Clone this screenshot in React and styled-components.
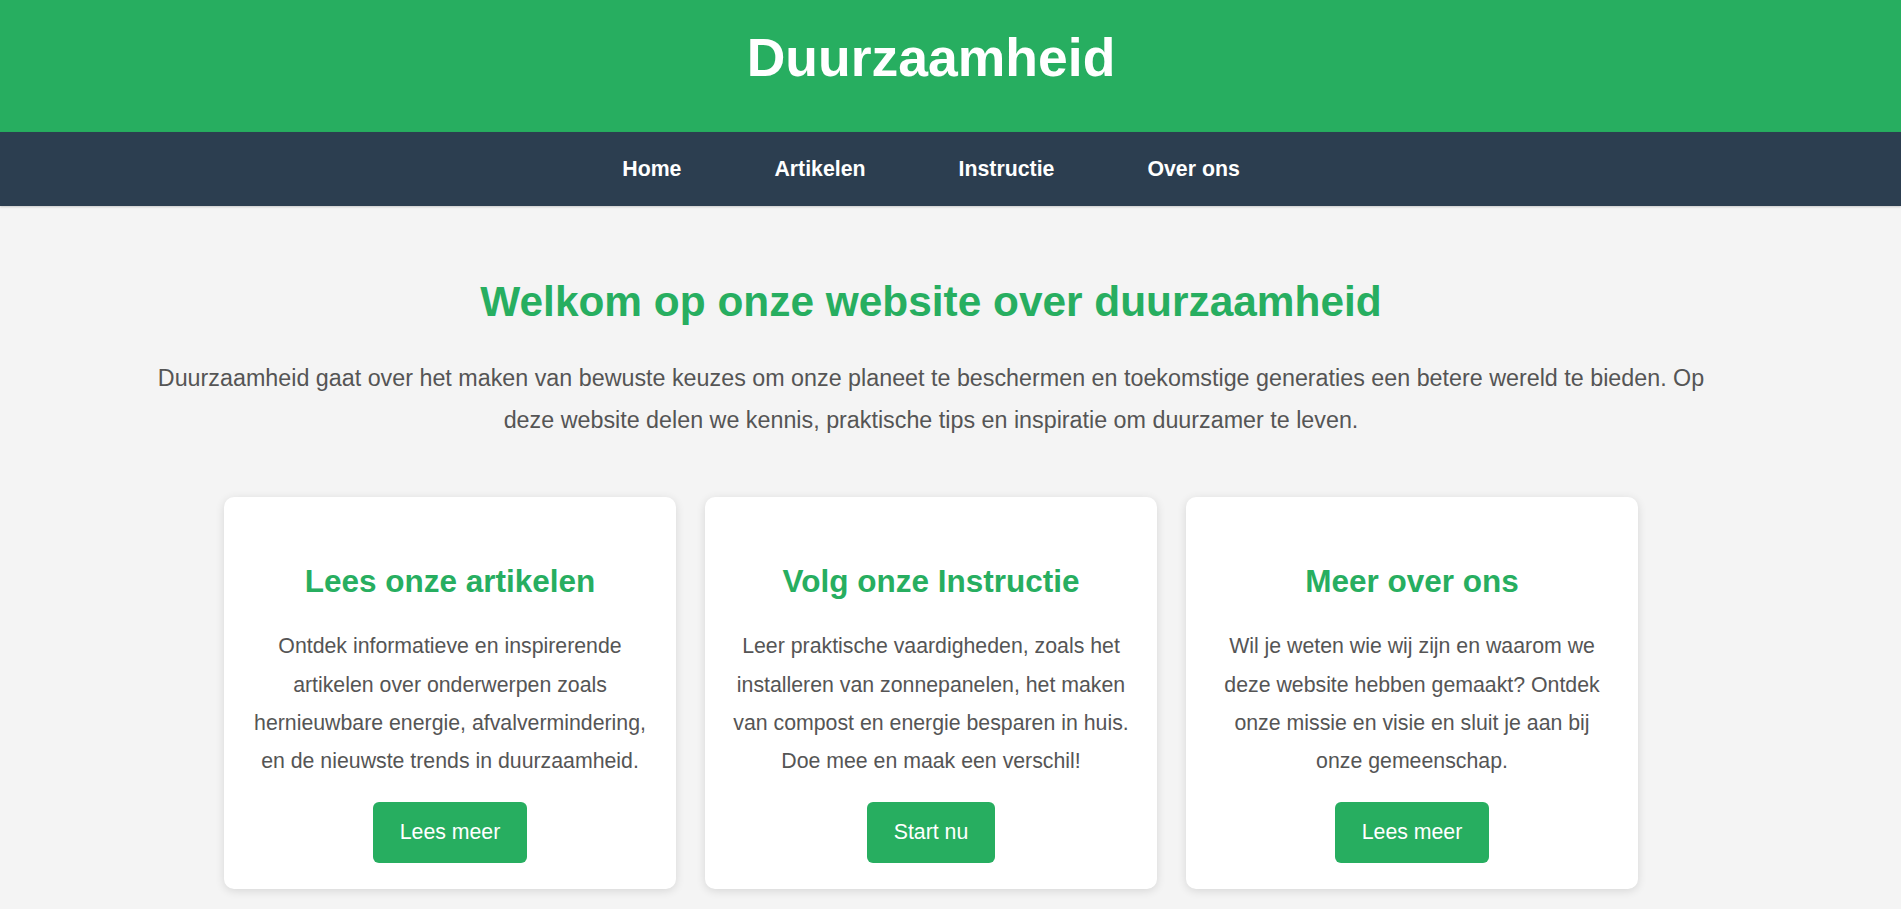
import React from "react";
import styled, { createGlobalStyle } from "styled-components";

const GREEN = "#27ae60";
const NAVY = "#2c3e50";
// the reference layout is centred slightly left of the window centre
const SHIFT = "39px";

const GlobalStyle = createGlobalStyle`
  html, body {
    margin: 0;
    padding: 0;
  }

  body {
    background: #f4f4f4;
    font-family: "Liberation Sans", Arial, sans-serif;
    color: #555;
  }
`;

const cards = [
  {
    title: "Lees onze artikelen",
    text: "Ontdek informatieve en inspirerende artikelen over onderwerpen zoals hernieuwbare energie, afvalvermindering, en de nieuwste trends in duurzaamheid.",
    button: "Lees meer",
  },
  {
    title: "Volg onze Instructie",
    text: "Leer praktische vaardigheden, zoals het installeren van zonnepanelen, het maken van compost en energie besparen in huis. Doe mee en maak een verschil!",
    button: "Start nu",
  },
  {
    title: "Meer over ons",
    text: "Wil je weten wie wij zijn en waarom we deze website hebben gemaakt? Ontdek onze missie en visie en sluit je aan bij onze gemeenschap.",
    button: "Lees meer",
  },
];

const App = () => {
  return (
    <>
      <GlobalStyle />
      <Header>
        <SiteTitle>Duurzaamheid</SiteTitle>
      </Header>

      <Nav>
        <NavList>
          <NavLink href="#">Home</NavLink>
          <NavLink href="#">Artikelen</NavLink>
          <NavLink href="#">Instructie</NavLink>
          <NavLink href="#">Over ons</NavLink>
        </NavList>
      </Nav>

      <Main>
        <Intro>
          <Heading>Welkom op onze website over duurzaamheid</Heading>
          <Lead>
            Duurzaamheid gaat over het maken van bewuste keuzes om onze planeet
            te beschermen en toekomstige generaties een betere wereld te
            bieden. Op deze website delen we kennis, praktische tips en
            inspiratie om duurzamer te leven.
          </Lead>
        </Intro>

        <CardRow>
          {cards.map((card) => (
            <Card key={card.title}>
              <CardTitle>{card.title}</CardTitle>
              <CardText>{card.text}</CardText>
              <Button href="#">{card.button}</Button>
            </Card>
          ))}
        </CardRow>
      </Main>
    </>
  );
};

// Styled Components
const Header = styled.header`
  background: ${GREEN};
  height: 132px;
  box-sizing: border-box;
  padding: 27px ${SHIFT} 0 0;
  text-align: center;
`;

const SiteTitle = styled.h1`
  margin: 0;
  color: #fff;
  font-size: 53.5px;
  font-weight: 700;
  line-height: normal;
`;

const Nav = styled.nav`
  background: ${NAVY};
  height: 74px;
  box-sizing: border-box;
  padding: 25px ${SHIFT} 0 0;
  box-shadow: 0 1px 2px rgba(0, 0, 0, 0.18);
  position: relative;
`;

const NavList = styled.div`
  display: flex;
  justify-content: center;
  gap: 93px;
`;

const NavLink = styled.a`
  color: #fff;
  text-decoration: none;
  font-size: 21.3px;
  font-weight: 700;
  line-height: normal;
`;

const Main = styled.main`
  display: flex;
  flex-direction: column;
  align-items: center;
  padding: 72px ${SHIFT} 16px 0;
`;

const Intro = styled.section`
  max-width: 1580px;
  text-align: center;
`;

const Heading = styled.h2`
  margin: 0 0 32px;
  color: ${GREEN};
  font-size: 42.4px;
  font-weight: 700;
  line-height: normal;
`;

const Lead = styled.p`
  margin: 0;
  font-size: 23.3px;
  line-height: 1.8;
  color: #555;
`;

const CardRow = styled.div`
  display: flex;
  justify-content: center;
  gap: 29px;
  margin-top: 55px;
`;

const Card = styled.article`
  width: 452px;
  box-sizing: border-box;
  padding: 66px 24px 26px;
  background: #fff;
  border-radius: 10px;
  box-shadow: 0 2px 10px rgba(0, 0, 0, 0.12);
  text-align: center;
`;

const CardTitle = styled.h3`
  margin: 0 0 27.5px;
  color: ${GREEN};
  font-size: 31.5px;
  font-weight: 700;
  line-height: normal;
`;

const CardText = styled.p`
  margin: 0 0 21px;
  font-size: 21.3px;
  line-height: 1.8;
  color: #555;
`;

const Button = styled.a`
  display: inline-block;
  padding: 18px 27px;
  background: ${GREEN};
  color: #fff;
  text-decoration: none;
  font-size: 21.3px;
  line-height: normal;
  border-radius: 6px;
`;

export default App;
